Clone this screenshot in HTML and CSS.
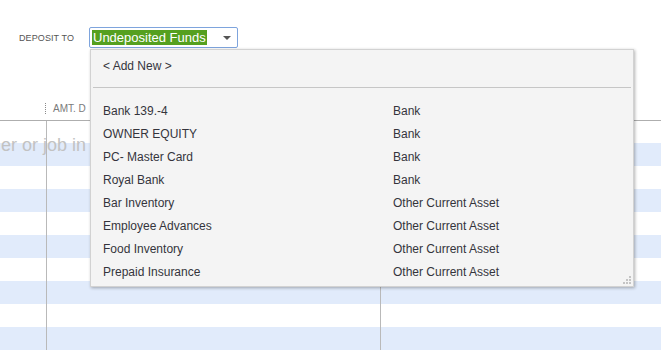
FILE: index.html
```html
<!DOCTYPE html>
<html>
<head>
<meta charset="utf-8">
<link rel="stylesheet" href="styles.css">
</head>
<body>
<div class="page">
  <div class="toolbar">
    <span class="label">DEPOSIT TO</span>
    <div class="select">
      <span class="sel-text">Undeposited Funds</span>
      <span class="arrow"></span>
    </div>
  </div>

  <div class="grid">
    <div class="grid-head">
      <div class="hcell1"></div>
      <div class="hdiv"></div>
      <div class="hcell2">AMT. D</div>
    </div>
    <div class="row first"><div class="c1"></div><div class="c2"></div><div class="c3"></div></div>
    <div class="row alt"><div class="c1"></div><div class="c2"></div><div class="c3"></div></div>
    <div class="row"><div class="c1"></div><div class="c2"></div><div class="c3"></div></div>
    <div class="row alt"><div class="c1"></div><div class="c2"></div><div class="c3"></div></div>
    <div class="row"><div class="c1"></div><div class="c2"></div><div class="c3"></div></div>
    <div class="row alt"><div class="c1"></div><div class="c2"></div><div class="c3"></div></div>
    <div class="row"><div class="c1"></div><div class="c2"></div><div class="c3"></div></div>
    <div class="row alt"><div class="c1"></div><div class="c2"></div><div class="c3"></div></div>
    <div class="row"><div class="c1"></div><div class="c2"></div><div class="c3"></div></div>
    <div class="row alt"><div class="c1"></div><div class="c2"></div><div class="c3"></div></div>
  </div>

  <div class="placeholder">er or job in</div>

  <div class="dropdown">
    <div class="add">&lt; Add New &gt;</div>
    <div class="divider"></div>
    <div class="list">
      <div class="item"><span class="name">Bank 139.-4</span><span class="type">Bank</span></div>
      <div class="item"><span class="name">OWNER EQUITY</span><span class="type">Bank</span></div>
      <div class="item"><span class="name">PC- Master Card</span><span class="type">Bank</span></div>
      <div class="item"><span class="name">Royal Bank</span><span class="type">Bank</span></div>
      <div class="item"><span class="name">Bar Inventory</span><span class="type">Other Current Asset</span></div>
      <div class="item"><span class="name">Employee Advances</span><span class="type">Other Current Asset</span></div>
      <div class="item"><span class="name">Food Inventory</span><span class="type">Other Current Asset</span></div>
      <div class="item"><span class="name">Prepaid Insurance</span><span class="type">Other Current Asset</span></div>
    </div>
    <svg class="grip" width="9" height="9" viewBox="0 0 9 9">
      <rect x="7" y="1" width="2" height="2" fill="#c4c4c4"/>
      <rect x="4" y="4" width="2" height="2" fill="#c4c4c4"/>
      <rect x="7" y="4" width="2" height="2" fill="#c4c4c4"/>
      <rect x="1" y="7" width="2" height="2" fill="#c4c4c4"/>
      <rect x="4" y="7" width="2" height="2" fill="#c4c4c4"/>
      <rect x="7" y="7" width="2" height="2" fill="#c4c4c4"/>
    </svg>
  </div>
</div>
</body>
</html>
```

FILE: styles.css
```css
* { box-sizing: border-box; }

html, body {
  margin: 0;
  padding: 0;
  background: #ffffff;
  font-family: "Liberation Sans", Arial, sans-serif;
}

.page {
  position: relative;
  width: 661px;
  height: 352px;
  overflow: hidden;
}

.toolbar {
  display: flex;
  align-items: center;
  padding-top: 27px;
}

.label {
  width: 70px;
  margin-left: 19px;
  font-size: 9px;
  color: #555555;
  letter-spacing: 0.1px;
}

.select {
  width: 149px;
  height: 21px;
  border: 1px solid #7ea4dd;
  border-radius: 2px;
  background: #ffffff;
  display: flex;
  align-items: center;
  padding-left: 2px;
}

.sel-text {
  background: #55a01f;
  color: #ffffff;
  font-size: 13px;
  line-height: 15px;
  padding: 0 1px 0 1px;
}

.arrow {
  margin-left: auto;
  margin-right: 6px;
  width: 0;
  height: 0;
  border-left: 4px solid transparent;
  border-right: 4px solid transparent;
  border-top: 4px solid #555555;
}

.grid {
  margin-top: 50px;
}

.grid-head {
  display: flex;
  align-items: center;
  height: 23px;
  border-bottom: 1px solid #aeaeae;
  padding-bottom: 1px;
}

.hcell1 { width: 45px; }

.hdiv {
  width: 1px;
  height: 11px;
  border-left: 1px dotted #8a8a8a;
}

.hcell2 {
  padding-left: 7px;
  font-size: 10px;
  color: #7a7a7a;
}

.row {
  display: flex;
  height: 23px;
}

.row.first { height: 22px; }

.row.alt { background: #e1ebfb; }

.c1 {
  width: 47px;
  border-right: 1px solid #b9b9b9;
}

.c2 {
  width: 334px;
  border-right: 1px solid #b9b9b9;
}

.c3 { flex: 1; }

.placeholder {
  position: absolute;
  left: 1px;
  top: 135px;
  font-size: 18px;
  line-height: 20px;
  color: #c2c2c2;
  white-space: nowrap;
}

.dropdown {
  position: absolute;
  left: 90px;
  top: 49px;
  width: 544px;
  height: 238px;
  background: #f4f4f4;
  border: 1px solid #d2d2d2;
  box-shadow: 1px 1px 3px rgba(0, 0, 0, 0.3);
  padding-top: 5px;
  font-size: 12px;
  color: #34343c;
}

.add {
  height: 23px;
  line-height: 23px;
  padding-left: 12px;
}

.divider {
  margin: 9px 2px 0 2px;
  border-top: 1px solid #c6c6c6;
}

.list {
  padding-top: 12px;
}

.item {
  display: flex;
  height: 23px;
  line-height: 23px;
}

.name {
  width: 302px;
  padding-left: 12px;
}

.grip {
  position: absolute;
  right: 2px;
  bottom: 2px;
}
```
